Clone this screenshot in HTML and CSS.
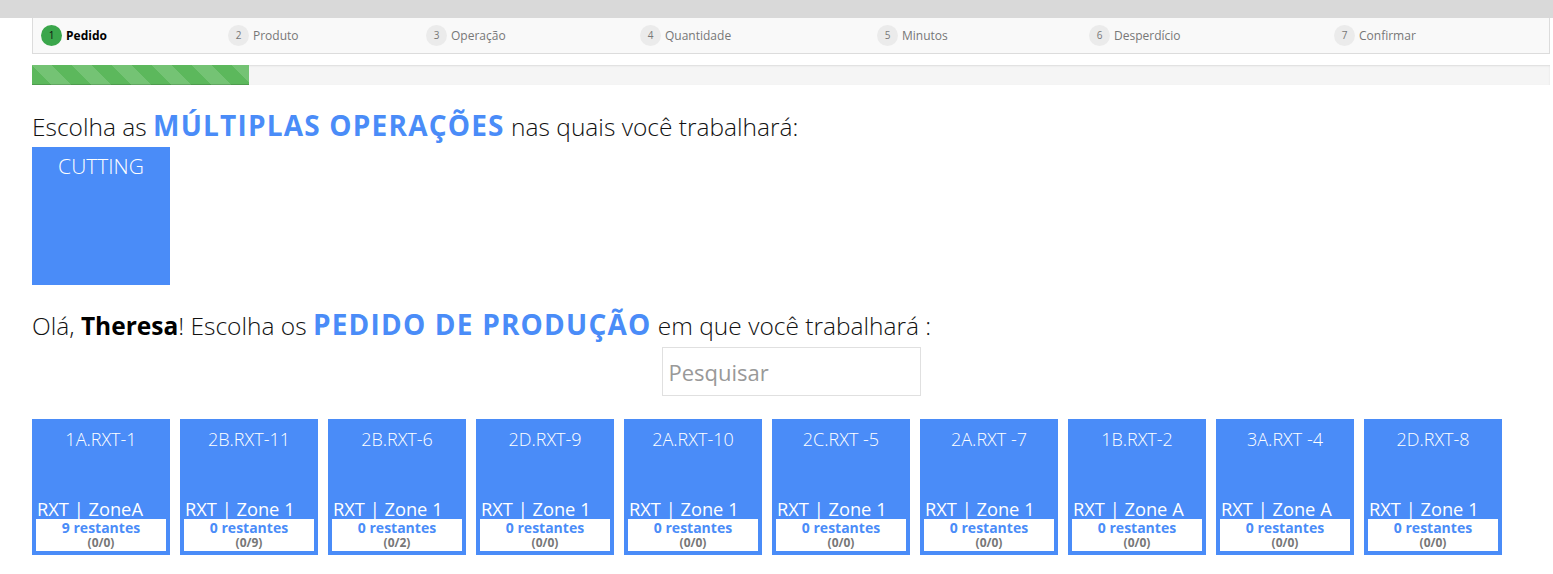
FILE: index.html
```html
<!DOCTYPE html>
<html lang="pt">
<head>
<meta charset="utf-8">
<title>Pedido</title>
<link rel="stylesheet" href="styles.css">
</head>
<body>
<div class="topbar"></div>
<div class="container">
  <div class="steps">
    <div class="step active"><span class="num">1</span><span class="label">Pedido</span></div>
    <div class="step"><span class="num">2</span><span class="label">Produto</span></div>
    <div class="step"><span class="num">3</span><span class="label">Operação</span></div>
    <div class="step"><span class="num">4</span><span class="label">Quantidade</span></div>
    <div class="step"><span class="num">5</span><span class="label">Minutos</span></div>
    <div class="step"><span class="num">6</span><span class="label">Desperdício</span></div>
    <div class="step"><span class="num">7</span><span class="label">Confirmar</span></div>
  </div>
  <div class="progress"><div class="progress-bar" style="width:14.2857%"></div></div>

  <h3 class="title first">Escolha as <span class="hl">MÚLTIPLAS OPERAÇÕES</span> nas quais você trabalhará:</h3>
  <div class="ops">
    <div class="op">CUTTING</div>
  </div>

  <h3 class="title second">Olá, <b>Theresa</b>! Escolha os <span class="hl">PEDIDO DE PRODUÇÃO</span> em que você trabalhará :</h3>
  <div class="search-wrap">
    <input class="search" type="text" placeholder="Pesquisar">
  </div>

  <div class="cards">
    <div class="card"><div class="card-title">1A.RXT-1</div><div class="zone">RXT | ZoneA</div><div class="rest"><div class="count">9 restantes</div><div class="ratio">(0/0)</div></div></div>
    <div class="card"><div class="card-title">2B.RXT-11</div><div class="zone">RXT | Zone 1</div><div class="rest"><div class="count">0 restantes</div><div class="ratio">(0/9)</div></div></div>
    <div class="card"><div class="card-title">2B.RXT-6</div><div class="zone">RXT | Zone 1</div><div class="rest"><div class="count">0 restantes</div><div class="ratio">(0/2)</div></div></div>
    <div class="card"><div class="card-title">2D.RXT-9</div><div class="zone">RXT | Zone 1</div><div class="rest"><div class="count">0 restantes</div><div class="ratio">(0/0)</div></div></div>
    <div class="card"><div class="card-title">2A.RXT-10</div><div class="zone">RXT | Zone 1</div><div class="rest"><div class="count">0 restantes</div><div class="ratio">(0/0)</div></div></div>
    <div class="card"><div class="card-title">2C.RXT -5</div><div class="zone">RXT | Zone 1</div><div class="rest"><div class="count">0 restantes</div><div class="ratio">(0/0)</div></div></div>
    <div class="card"><div class="card-title">2A.RXT -7</div><div class="zone">RXT | Zone 1</div><div class="rest"><div class="count">0 restantes</div><div class="ratio">(0/0)</div></div></div>
    <div class="card"><div class="card-title">1B.RXT-2</div><div class="zone">RXT | Zone A</div><div class="rest"><div class="count">0 restantes</div><div class="ratio">(0/0)</div></div></div>
    <div class="card"><div class="card-title">3A.RXT -4</div><div class="zone">RXT | Zone A</div><div class="rest"><div class="count">0 restantes</div><div class="ratio">(0/0)</div></div></div>
    <div class="card"><div class="card-title">2D.RXT-8</div><div class="zone">RXT | Zone 1</div><div class="rest"><div class="count">0 restantes</div><div class="ratio">(0/0)</div></div></div>
  </div>
</div>
</body>
</html>
```
FILE: styles.css
```css
* { box-sizing: border-box; }
html, body { margin: 0; padding: 0; background: #fff; }
body { font-family: "Open Sans", "Liberation Sans", sans-serif; color: #222; }

.topbar { height: 18px; background: #d9d9d9; }

.container { margin-left: 32px; width: 1518px; }

.steps {
  display: grid;
  grid-template-columns: 187px 198px 214px 237px 212px 245px 1fr;
  height: 36px;
  background: #f9f9f9;
  border: 1px solid #dcdcdc;
  border-top: 0;
}
.step { display: flex; align-items: center; gap: 4px; padding-left: 8px; }
.num {
  width: 21px; height: 21px; border-radius: 50%;
  background: #ebebeb; color: #777;
  font-size: 10px; line-height: 21px; text-align: center;
}
.label { font-size: 12px; color: #777; }
.step.active .num { background: #3aa64b; color: #111; }
.step.active .label { color: #000; font-weight: 700; }

.progress {
  margin-top: 11px; height: 20px;
  background: #f5f5f5;
  box-shadow: inset 0 1px 2px rgba(0,0,0,.1);
}
.progress-bar {
  height: 100%;
  background-color: #5cb85c;
  background-image: linear-gradient(45deg, rgba(255,255,255,.15) 25%, transparent 25%, transparent 50%, rgba(255,255,255,.15) 50%, rgba(255,255,255,.15) 75%, transparent 75%, transparent);
  background-size: 40px 40px;
  box-shadow: inset 0 -1px 0 rgba(0,0,0,.15);
}

.title {
  margin: 0; font-weight: 300; font-size: 24.5px; line-height: 30px; color: #111;
}
.title.first { margin-top: 27px; }
.title.second { margin-top: 26px; }
.title b { font-weight: 700; color: #000; }
.hl { color: #4a8cf8; font-weight: 700; font-size: 28px; letter-spacing: 1.2px; line-height: 0; }

.ops { display: flex; margin-top: 5px; }
.op {
  width: 138px; height: 138px; background: #4a8cf8; color: #fff;
  font-weight: 300; font-size: 21px; line-height: 28px; text-align: center;
  padding-top: 5px;
}

.search-wrap { display: flex; justify-content: center; margin-top: 6px; }
.search {
  width: 259px; height: 49px; border: 1px solid #e0e0e0;
  font-family: "Open Sans", "Liberation Sans", sans-serif;
  font-size: 22px; font-weight: 400; padding: 0 6px; color: #333; outline: none;
}
.search::placeholder { color: #999; }

.cards { display: flex; gap: 10px; margin-top: 23px; }
.card {
  width: 138px; height: 136px; background: #4a8cf8; color: #fff;
  display: flex; flex-direction: column; padding: 0 4px 4px;
}
.card-title {
  font-weight: 300; font-size: 18px; line-height: 24px; text-align: center; padding-top: 8px;
}
.zone {
  margin-top: auto; font-size: 18.3px; line-height: 18px; padding-left: 1px; white-space: nowrap;
}
.rest {
  margin-top: 1px; background: #fff; text-align: center; padding: 1px 0 1px; font-weight: 700;
}
.count { color: #4a8cf8; font-size: 14px; line-height: 16px; }
.ratio { color: #777; font-size: 12px; line-height: 14px; }
```
